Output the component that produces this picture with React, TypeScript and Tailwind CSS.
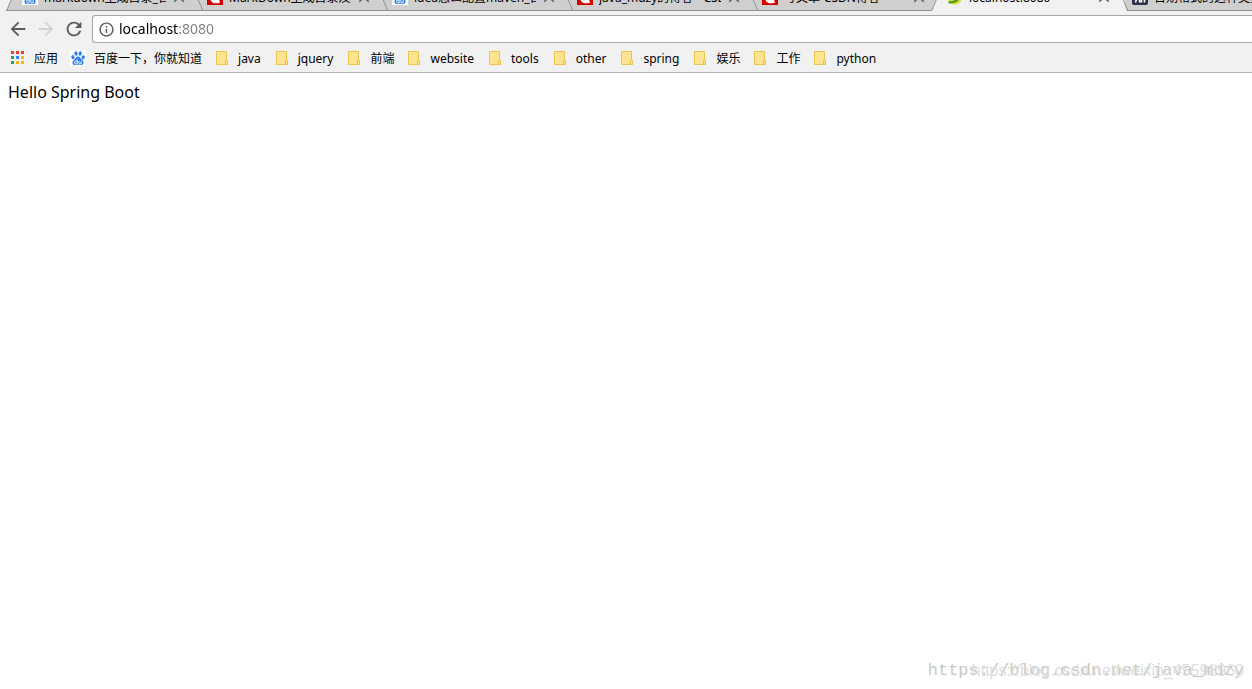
import { MdArrowBack, MdArrowForward, MdClose, MdInfoOutline, MdRefresh } from 'react-icons/md'

type IconName = 'baidu' | 'csdn' | 'spring' | 'dark' | 'apps' | 'folder'

interface Tab {
  title: string
  icon: IconName
  active?: boolean
}

const TABS: Tab[] = [
  { title: 'markdown生成目录_百度', icon: 'baidu' },
  { title: 'MarkDown生成目录及', icon: 'csdn' },
  { title: 'idea怎么配置maven_百', icon: 'baidu' },
  { title: 'java_mdzy的博客 - CSD', icon: 'csdn' },
  { title: '写文章-CSDN博客', icon: 'csdn' },
  { title: 'localhost:8080', icon: 'spring', active: true },
  { title: '日期格式的这种类型', icon: 'dark' },
]

const BOOKMARKS: { label: string; icon: IconName }[] = [
  { label: '应用', icon: 'apps' },
  { label: '百度一下，你就知道', icon: 'baidu' },
  { label: 'java', icon: 'folder' },
  { label: 'jquery', icon: 'folder' },
  { label: '前端', icon: 'folder' },
  { label: 'website', icon: 'folder' },
  { label: 'tools', icon: 'folder' },
  { label: 'other', icon: 'folder' },
  { label: 'spring', icon: 'folder' },
  { label: '娱乐', icon: 'folder' },
  { label: '工作', icon: 'folder' },
  { label: 'python', icon: 'folder' },
]

const APP_DOTS = [
  '#f03a30', '#f03a30', '#f03a30',
  '#2aa35a', '#2b8cf5', '#fbb412',
  '#2aa35a', '#fbb412', '#fbb412',
]

function Icon({ name }: { name: IconName }) {
  return (
    <svg viewBox="0 0 16 16" className="size-4 shrink-0" aria-hidden="true">
      {name === 'apps' &&
        APP_DOTS.map((fill, i) => (
          <rect key={i} x={1 + (i % 3) * 5} y={1 + Math.floor(i / 3) * 5} width="3" height="3" fill={fill} />
        ))}
      {name === 'baidu' && (
        <>
          <rect width="16" height="16" fill="#fff" />
          <g fill="#2d7ff0">
            <ellipse cx="2.9" cy="7.2" rx="1.6" ry="2.1" transform="rotate(-15 2.9 7.2)" />
            <ellipse cx="6" cy="3.5" rx="1.6" ry="2.2" />
            <ellipse cx="10.2" cy="3.5" rx="1.6" ry="2.2" transform="rotate(10 10.2 3.5)" />
            <ellipse cx="13.2" cy="7.4" rx="1.6" ry="2.1" transform="rotate(12 13.2 7.4)" />
            <path d="M8 6.6c1.9 0 2.5 1.7 3.7 2.9 1.2 1.1 2.2 1.9 1.9 3.5-.3 1.9-1.9 2.2-3.4 2-1.5-.2-2.8-.2-4.3 0-1.6.2-3.2-.3-3.4-2.1-.2-1.7 1-2.4 2-3.4C5.6 8.3 6.2 6.6 8 6.6z" />
          </g>
          <path d="M7.2 9.5v4.3H5.8a1.3 1.3 0 0 1 0-2.7h1.4M8.9 11v2c0 .6.3.8.8.8h1.5V11" fill="none" stroke="#fff" strokeWidth=".9" />
        </>
      )}
      {name === 'csdn' && (
        <>
          <rect width="16" height="16" fill="#d50000" />
          <path d="M13 4.5C9 2.5 5.500 5 5 8.500c-.5 3.500 2.500 5 7.500 3.500" fill="none" stroke="#fff" strokeWidth="3.5" />
        </>
      )}
      {name === 'spring' && (
        <>
          <path d="M14.5 1c1.5 6.5.5 14-6.5 14.500C3 15.800.8 12 1 9c.3-5 7.5-3 13.500-8z" fill="#d7df23" />
          <path d="M1.5 13.500C7 13.500 11 12 13.500 7" fill="none" stroke="#4a8f2a" strokeWidth="2" />
        </>
      )}
      {name === 'dark' && (
        <>
          <rect width="16" height="16" rx="2" fill="#2d3047" />
          <path d="M3.5 13.500 6 5l2 8.500M9.500 5v8.500M12.500 5v8.500" fill="none" stroke="#fff" strokeWidth="1.6" />
        </>
      )}
      {name === 'folder' && (
        <>
          <path d="M2.5 1.5h10v9h1v4h-11z" fill="#ffe48f" stroke="#eac54f" />
          <path d="M11.5 14.5v-4h2v4z" fill="#ffe48f" stroke="#eac54f" />
        </>
      )}
    </svg>
  )
}

// Slanted edge between a tab and whatever stands to its left
function TabEdge({ index }: { index: number }) {
  const rising = index === 0 || TABS[index].active
  return (
    <svg viewBox="0 0 16 28" className="absolute -bottom-px -left-[10px] h-7 w-4" aria-hidden="true">
      {index === 0 && <path d="M13 0h3v28H1z" fill="#cfcfcf" />}
      {index === 0 && <path d="M1 27.5h15" stroke="#919191" />}
      {TABS[index].active && <path d="M13 0h3v28H1z" fill="#f1f1f1" />}
      {index > 0 && TABS[index - 1].active && <path d="M0 0v28h12L0 0z" fill="#f1f1f1" />}
      <path d={rising ? 'M13.5 0 1.5 28' : 'M1 0l12 28'} fill="none" stroke="#919191" />
    </svg>
  )
}

function TabStrip() {
  return (
    <div className="flex h-[11px] items-end overflow-hidden bg-[#f1f1f1] pl-[15px]">
      {TABS.map((tab, i) => (
        <div
          key={tab.title}
          className={`relative flex h-[27px] w-[185px] shrink-0 items-center border-b pr-3 pl-[7px] ${
            tab.active ? 'border-[#f1f1f1] bg-[#f1f1f1]' : 'border-[#919191] bg-[#cfcfcf]'
          }`}
        >
          <TabEdge index={i} />
          <button className="flex min-w-0 flex-1 items-center gap-[6px] text-left text-xs leading-4">
            <Icon name={tab.icon} />
            <span className="min-w-0 flex-1 overflow-hidden pt-0.5 whitespace-nowrap">{tab.title}</span>
          </button>
          <button aria-label="Close tab" className="ml-1 shrink-0">
            <MdClose className="size-[18px] text-[#5a5a5a]" />
          </button>
        </div>
      ))}
    </div>
  )
}

function Toolbar() {
  return (
    <div className="flex items-center bg-[#f1f1f1] pt-1 pl-[7px]">
      <div className="flex items-center gap-[6px] pr-[7px] text-[#5a5a5a]">
        <button aria-label="Back">
          <MdArrowBack className="size-[22px]" />
        </button>
        <button aria-label="Forward" disabled className="text-[#d2d2d2]">
          <MdArrowForward className="size-[22px]" />
        </button>
        <button aria-label="Reload">
          <MdRefresh className="size-[22px]" />
        </button>
      </div>
      <div className="flex h-7 flex-1 items-center gap-1 rounded-l-[3px] border border-r-0 border-[#a6a6a6] bg-white pl-[5px]">
        <MdInfoOutline className="size-[17px] text-[#5a5a5a]" />
        <input
          aria-label="Address"
          defaultValue="localhost:8080"
          className="min-w-0 flex-1 bg-linear-to-r from-black from-[60px] to-[#808080] to-[60px] bg-clip-text text-sm text-transparent outline-none"
        />
      </div>
    </div>
  )
}

function BookmarkBar() {
  return (
    <nav className="flex h-[30px] items-center gap-3 overflow-hidden border-b border-[#b6b4b6] bg-[#f1f1f1] pl-[10px]">
      {BOOKMARKS.map(({ label, icon }) => (
        <a
          key={label}
          href="#"
          className={`flex shrink-0 items-center gap-2 text-xs ${/^[a-z]/.test(label) ? 'pr-px' : ''}`}
        >
          <Icon name={icon} />
          <span className="pt-0.5">{label}</span>
        </a>
      ))}
    </nav>
  )
}

export default function App() {
  return (
    <div className="relative flex min-h-screen flex-col bg-white font-['Noto_Sans','Noto_Sans_CJK_SC',sans-serif] text-black">
      <TabStrip />
      <Toolbar />
      <BookmarkBar />
      <main className="flex-1 p-2">
        <p className="text-base leading-[22px]">Hello Spring Boot</p>
      </main>
      <div className="absolute right-2 bottom-[6px] font-['Liberation_Mono',monospace] text-[17px] leading-6 text-[#c8c8c4]">
        https://blog.csdn.net/java_mdzy
      </div>
      <div className="absolute right-2 bottom-2 font-['Liberation_Sans',sans-serif] text-base leading-5 text-[#dedede]">
        https://blog.csdn.net/weixin_45598960
      </div>
    </div>
  )
}
